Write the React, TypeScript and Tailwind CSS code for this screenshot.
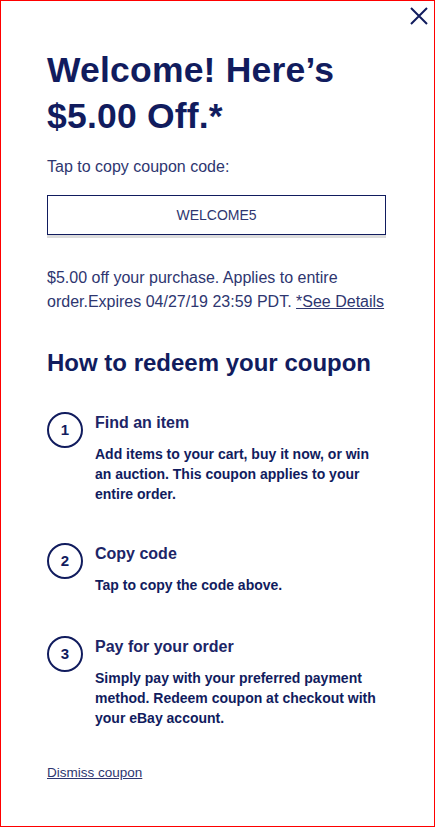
const steps = [
    {
        n: 1,
        title: 'Find an item',
        body: 'Add items to your cart, buy it now, or win an auction. This coupon applies to your entire order.',
        mt: 'mt-0',
    },
    { n: 2, title: 'Copy code', body: 'Tap to copy the code above.', mt: 'mt-[39px]' },
    {
        n: 3,
        title: 'Pay for your order',
        body: 'Simply pay with your preferred payment method. Redeem coupon at checkout with your eBay account.',
        mt: 'mt-[41px]',
    },
]

export default function App() {
    return (
        <div
            className="relative h-[827px] w-[435px] border border-[#ff0000] bg-white text-[#111c5e]"
            style={{ fontFamily: '"Liberation Sans", Arial, sans-serif' }}
        >
            {/* Close */}
            <button className="absolute left-[409px] top-[6px] text-[#111c5e]">
                <svg width="18" height="18" viewBox="0 0 18 18" fill="none" stroke="currentColor" strokeWidth="2">
                    <path d="M1 1L17 17M17 1L1 17" />
                </svg>
            </button>

            <div className="px-[46px] pt-[46px]">
                <h1 className="text-[35.5px] font-bold leading-[46px] tracking-[0.2px]">
                    Welcome! Here’s
                    <br />
                    $5.00 Off.*
                </h1>

                <p className="mt-[18px] text-[16px] leading-[20px] text-[#2e3670]">Tap to copy coupon code:</p>

                {/* Coupon code box */}
                <div className="mt-[18px] w-[339px] shadow-[0_3px_0_#dcdcdc]">
                    <div className="flex h-[40px] items-center justify-center border border-[#111c5e] text-[14px] text-[#2e3670]">
                        WELCOME5
                    </div>
                </div>

                <p className="mt-[31px] text-[16px] leading-[24px] text-[#2e3670]">
                    $5.00 off your purchase. Applies to entire order.Expires 04/27/19 23:59 PDT.{' '}
                    <a className="underline">*See Details</a>
                </p>

                <h2 className="mt-[34px] text-[24px] font-bold leading-[30px]">How to redeem your coupon</h2>

                <div className="mt-[34px] flex flex-col">
                    {steps.map((s) => (
                        <div key={s.n} className={`flex gap-[12px] ${s.mt}`}>
                            <div className="flex h-[36px] w-[36px] shrink-0 items-center justify-center rounded-full border-2 border-[#111c5e] text-[15px] font-bold">
                                {s.n}
                            </div>
                            <div className="w-[290px]">
                                <div className="text-[16px] font-bold leading-[22px] text-[#1c2567]">{s.title}</div>
                                <p className="mt-[10px] text-[14px] font-bold leading-[20px]">{s.body}</p>
                            </div>
                        </div>
                    ))}
                </div>

                <a className="mt-[37px] block text-[13.5px] leading-[16px] text-[#2e3670] underline">Dismiss coupon</a>
            </div>
        </div>
    )
}
